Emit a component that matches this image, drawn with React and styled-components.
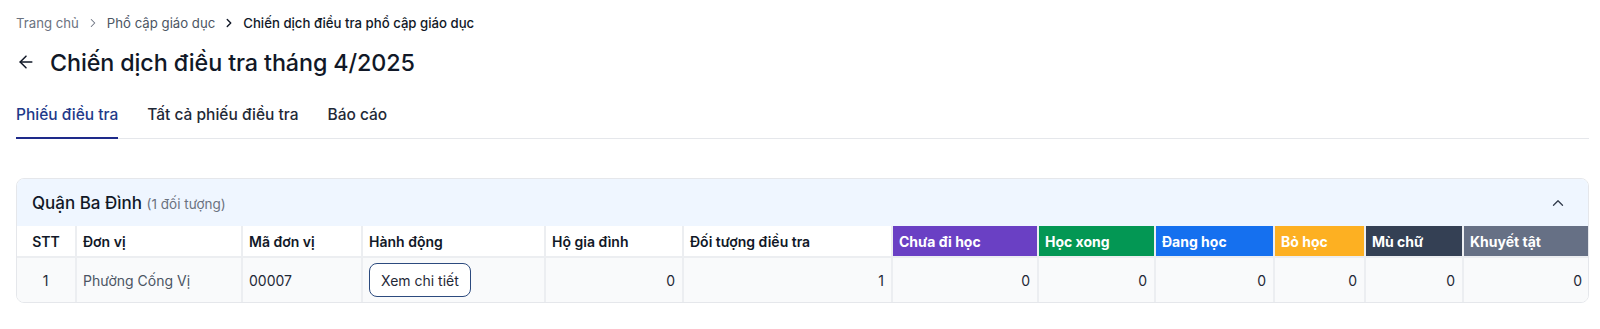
import React from 'react'
import styled, { createGlobalStyle } from 'styled-components';
import { ArrowLeft, ChevronRight, ChevronUp } from 'lucide-react';

const GlobalStyle = createGlobalStyle`
    body {
        margin: 0;
        background: #ffffff;
        font-family: Inter, "Noto Sans", "Liberation Sans", sans-serif;
        color: #111827;
    }
`;

const columns = [
    { key: 'stt', label: 'STT', width: 59, align: 'center' },
    { key: 'donVi', label: 'Đơn vị', width: 166 },
    { key: 'ma', label: 'Mã đơn vị', width: 120 },
    { key: 'action', label: 'Hành động', width: 183 },
    { key: 'hoGiaDinh', label: 'Hộ gia đình', width: 138, num: true },
    { key: 'doiTuong', label: 'Đối tượng điều tra', width: 209, num: true },
    { key: 'chuaDiHoc', label: 'Chưa đi học', width: 146, num: true, color: '#6a40c4' },
    { key: 'hocXong', label: 'Học xong', width: 117, num: true, color: '#039754' },
    { key: 'dangHoc', label: 'Đang học', width: 119, num: true, color: '#1570ef' },
    { key: 'boHoc', label: 'Bỏ học', width: 91, num: true, color: '#fdb022' },
    { key: 'muChu', label: 'Mù chữ', width: 98, num: true, color: '#344054' },
    { key: 'khuyetTat', label: 'Khuyết tật', width: 126, num: true, color: '#667085' },
];

const rows = [
    { stt: 1, donVi: 'Phường Cống Vị', ma: '00007', hoGiaDinh: 0, doiTuong: 1, chuaDiHoc: 0, hocXong: 0, dangHoc: 0, boHoc: 0, muChu: 0, khuyetTat: 0 },
];

const App = () => {
    return (
        <Page>
            <GlobalStyle />
            <Breadcrumb>
                <Crumb>Trang chủ</Crumb>
                <Sep><ChevronRight size={14} strokeWidth={1.8} /></Sep>
                <Crumb $mid>Phổ cập giáo dục</Crumb>
                <Sep $dark><ChevronRight size={14} strokeWidth={2.4} /></Sep>
                <Crumb $current>Chiến dịch điều tra phổ cập giáo dục</Crumb>
            </Breadcrumb>

            <TitleRow>
                <BackButton><ArrowLeft size={20} strokeWidth={1.8} /></BackButton>
                <Title>Chiến dịch điều tra tháng 4/2025</Title>
            </TitleRow>

            <Tabs>
                <Tab $active>Phiếu điều tra</Tab>
                <Tab>Tất cả phiếu điều tra</Tab>
                <Tab>Báo cáo</Tab>
            </Tabs>

            <Card>
                <CardHeader>
                    <GroupName>
                        Quận Ba Đình <Count>(1 đối tượng)</Count>
                    </GroupName>
                    <ChevronUp size={18} strokeWidth={1.8} color="#374151" />
                </CardHeader>
                <Table>
                    <colgroup>
                        {columns.map(c => <col key={c.key} style={{ width: c.width }} />)}
                    </colgroup>
                    <thead>
                        <tr>
                            {columns.map(c => (
                                <Th key={c.key} $bg={c.color} $align={c.align}>{c.label}</Th>
                            ))}
                        </tr>
                    </thead>
                    <tbody>
                        {rows.map(r => (
                            <tr key={r.stt}>
                                {columns.map(c => (
                                    <Td key={c.key} $align={c.align || (c.num ? 'right' : 'left')} $muted={c.key === 'donVi'}>
                                        {c.key === 'action'
                                            ? <DetailButton>Xem chi tiết</DetailButton>
                                            : r[c.key]}
                                    </Td>
                                ))}
                            </tr>
                        ))}
                    </tbody>
                </Table>
            </Card>
        </Page>
    )
}

const Page = styled.div`
    padding: 13px 11px 0 16px;
`;

const Breadcrumb = styled.div`
    display: flex;
    align-items: center;
    height: 20px;
    font-size: 13.2px;
    gap: 6px;
`;

const Crumb = styled.span`
    color: ${p => p.$current ? '#111827' : p.$mid ? '#4b5563' : '#6b7280'};
    font-weight: ${p => p.$current ? 500 : 400};
`;

const Sep = styled.span`
    display: flex;
    align-items: center;
    color: ${p => p.$dark ? '#111827' : '#6b7280'};
    margin: 0 1px;
`;

const TitleRow = styled.div`
    display: flex;
    align-items: center;
    gap: 14px;
    height: 32px;
    margin-top: 13px;
`;

const BackButton = styled.span`
    display: flex;
    align-items: center;
    color: #111827;
`;

const Title = styled.h1`
    margin: 0;
    font-size: 23.3px;
    font-weight: 500;
    letter-spacing: -0.1px;
    color: #111827;
`;

const Tabs = styled.div`
    display: flex;
    gap: 29px;
    margin-top: 16px;
    border-bottom: 1px solid #e5e7eb;
`;

const Tab = styled.div`
    position: relative;
    padding: 10px 0 12px;
    line-height: 22px;
    font-size: 15.5px;
    font-weight: 500;
    color: ${p => p.$active ? '#1e3a8a' : '#1f2937'};
    &::after {
        content: '';
        position: absolute;
        left: 0;
        right: 0;
        bottom: -1px;
        height: 2px;
        background: ${p => p.$active ? '#1e2a8a' : 'transparent'};
    }
`;

const Card = styled.div`
    margin-top: 39px;
    border: 1px solid #e5e7eb;
    border-radius: 8px;
    overflow: hidden;
`;

const CardHeader = styled.div`
    display: flex;
    align-items: center;
    justify-content: space-between;
    height: 47px;
    padding: 0 21px 0 15px;
    background: #eff6ff;
`;

const GroupName = styled.div`
    font-size: 17px;
    font-weight: 500;
    color: #111827;
`;

const Count = styled.span`
    font-size: 13.5px;
    font-weight: 400;
    color: #6b7280;
`;

const Table = styled.table`
    width: 100%;
    table-layout: fixed;
    border-collapse: collapse;
    border-style: hidden;
    font-size: 14px;
`;

const Th = styled.th`
    height: 30px;
    padding: 0 6px;
    text-align: ${p => p.$align || 'left'};
    font-weight: ${p => p.$bg ? 700 : 600};
    color: ${p => p.$bg ? '#ffffff' : '#111827'};
    background: ${p => p.$bg || '#ffffff'};
    border: 2px solid #eceef1;
    white-space: nowrap;
`;

const Td = styled.td`
    height: 44px;
    padding: 0 7px 0 6px;
    text-align: ${p => p.$align};
    color: ${p => p.$muted ? '#4b5563' : '#1f2937'};
    background: #f9fafb;
    border: 2px solid #eceef1;
`;

const DetailButton = styled.button`
    height: 34px;
    padding: 0 11px;
    border: 1px solid #2c4a7e;
    border-radius: 8px;
    background: #ffffff;
    font-family: inherit;
    font-size: 14px;
    color: #1f2937;
    cursor: pointer;
`;

export default App
